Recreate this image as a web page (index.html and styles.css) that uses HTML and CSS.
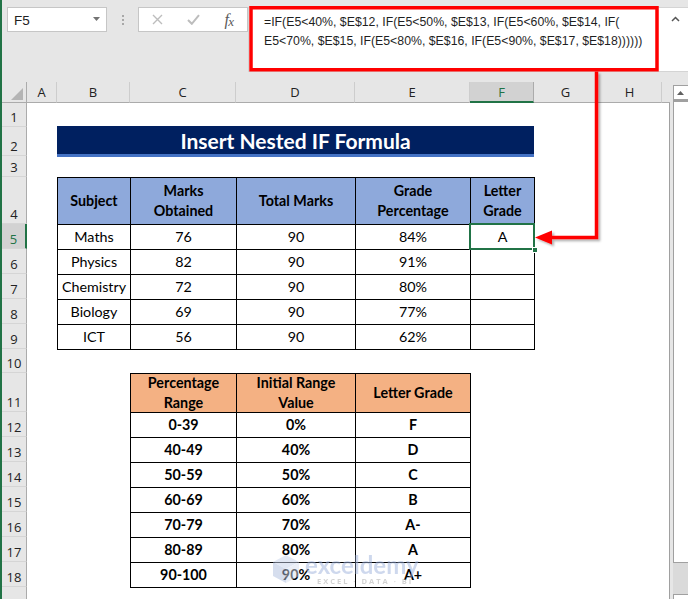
FILE: index.html
```html
<!DOCTYPE html>
<html>
<head>
<meta charset="utf-8">
<link rel="stylesheet" href="styles.css">
</head>
<body>
<div class="app">
  <div class="edge"></div>
  <div class="main">
    <div class="fbar">
      <div class="namebox"><span>F5</span>
        <svg class="caret" width="7" height="4" viewBox="0 0 7 4"><polygon points="0,0 7,0 3.5,4" fill="#737373"/></svg>
      </div>
      <div class="dots"><i></i><i></i><i></i></div>
      <div class="fbtns">
        <div class="slot"><svg width="11" height="11" viewBox="0 0 11 11"><path d="M1 1 L10 10 M10 1 L1 10" stroke="#bdbdbd" stroke-width="1.4" fill="none"/></svg></div>
        <div class="slot"><svg width="13" height="11" viewBox="0 0 13 11"><path d="M1 6 L4.8 9.8 L12 1.2" stroke="#bdbdbd" stroke-width="2" fill="none"/></svg></div>
        <div class="slot"><span class="fx">f<span class="fxx">x</span></span></div>
      </div>
      <div class="finput">
        <div class="ftext">
          <div>=IF(E5&lt;40%, $E$12, IF(E5&lt;50%, $E$13, IF(E5&lt;60%, $E$14, IF(</div>
          <div>E5&lt;70%, $E$15, IF(E5&lt;80%, $E$16, IF(E5&lt;90%, $E$17, $E$18))))))</div>
        </div>
        <svg class="chev" width="9" height="6" viewBox="0 0 9 6"><path d="M1 5 L4.5 1.5 L8 5" stroke="#555" stroke-width="1.5" fill="none"/></svg>
      </div>
    </div>
    <div class="sheetwrap">
      <div class="sheet">
        <div class="colheads">
          <div class="ch corner"><div class="tri"></div></div>
          <div class="ch w30">A</div>
          <div class="ch w73">B</div>
          <div class="ch w106">C</div>
          <div class="ch w119">D</div>
          <div class="ch w115">E</div>
          <div class="ch w64 sel">F</div>
          <div class="ch w64">G</div>
          <div class="ch w64">H</div>
          <div class="ch rest"></div>
        </div>
        <div class="body">
          <div class="rowheads">
            <div class="rh h24">1</div>
            <div class="rh h29">2</div>
            <div class="rh h21">3</div>
            <div class="rh h47">4</div>
            <div class="rh h25 sel">5</div>
            <div class="rh h25">6</div>
            <div class="rh h25">7</div>
            <div class="rh h25">8</div>
            <div class="rh h25">9</div>
            <div class="rh h24">10</div>
            <div class="rh h39">11</div>
            <div class="rh h25">12</div>
            <div class="rh h25">13</div>
            <div class="rh h25">14</div>
            <div class="rh h25">15</div>
            <div class="rh h25">16</div>
            <div class="rh h25">17</div>
            <div class="rh h25">18</div>
            <div class="rh h25"></div>
          </div>
          <div class="cells">
            <div class="sp s23"></div>
            <div class="title">Insert Nested IF Formula</div>
            <div class="sp s20"></div>
            <div class="tbl t1">
              <div class="c h">Subject</div>
              <div class="c h">Marks<br>Obtained</div>
              <div class="c h">Total Marks</div>
              <div class="c h">Grade<br>Percentage</div>
              <div class="c h">Letter<br>Grade</div>

              <div class="c">Maths</div><div class="c">76</div><div class="c">90</div><div class="c">84%</div><div class="c active">A<span class="sel-box"></span><span class="handle"></span></div>
              <div class="c">Physics</div><div class="c">82</div><div class="c">90</div><div class="c">91%</div><div class="c"></div>
              <div class="c">Chemistry</div><div class="c">72</div><div class="c">90</div><div class="c">80%</div><div class="c"></div>
              <div class="c">Biology</div><div class="c">69</div><div class="c">90</div><div class="c">77%</div><div class="c"></div>
              <div class="c">ICT</div><div class="c">56</div><div class="c">90</div><div class="c">62%</div><div class="c"></div>
            </div>
            <div class="sp s23"></div>
            <div class="tbl t2">
              <div class="c h">Percentage<br>Range</div>
              <div class="c h">Initial Range<br>Value</div>
              <div class="c h">Letter Grade</div>

              <div class="c">0-39</div><div class="c">0%</div><div class="c">F</div>
              <div class="c">40-49</div><div class="c">40%</div><div class="c">D</div>
              <div class="c">50-59</div><div class="c">50%</div><div class="c">C</div>
              <div class="c">60-69</div><div class="c">60%</div><div class="c">B</div>
              <div class="c">70-79</div><div class="c">70%</div><div class="c">A-</div>
              <div class="c">80-89</div><div class="c">80%</div><div class="c">A</div>
              <div class="c">90-100</div><div class="c">90%</div><div class="c">A+</div>
            </div>
          </div>
        </div>
      </div>
      <div class="vscroll">
        <div class="sb-up"><svg width="7" height="4" viewBox="0 0 7 4"><polygon points="0,4 7,4 3.5,0" fill="#606060"/></svg></div>
        <div class="sb-thumb"></div>
        <div class="sb-track"></div>
        <div class="sb-down"></div>
      </div>
    </div>
  </div>

  <svg class="annot" width="688" height="599" viewBox="0 0 688 599">
    <defs>
      <filter id="sh" x="-10%" y="-10%" width="130%" height="130%">
        <feDropShadow dx="2" dy="2" stdDeviation="1" flood-color="#000" flood-opacity="0.3"/>
      </filter>
    </defs>
    <rect x="251" y="7.75" width="406" height="62" fill="none" stroke="#ff0000" stroke-width="3.5"/>
    <g filter="url(#sh)">
      <path d="M596.5 71.5 L596.5 237.5 L549 237.5" fill="none" stroke="#ff0000" stroke-width="3.5"/>
      <polygon points="535,237.5 552,230.5 552,244.5" fill="#ff0000"/>
    </g>
  </svg>

  <div class="wm">
    <svg class="cube" width="28" height="30" viewBox="0 0 28 30">
      <polygon points="14,1 27,8 14,15 1,8" fill="#c6d2ea"/>
      <polygon points="1,8 14,15 14,29 1,22" fill="#aebedf"/>
      <polygon points="27,8 14,15 14,29 27,22" fill="#d9e1f1"/>
    </svg>
    <div class="wm-t">
      <div class="wm-name">exceldemy</div>
      <div class="wm-sub">EXCEL · DATA · BI</div>
    </div>
  </div>
</div>
</body>
</html>
```

FILE: styles.css
```css
* { box-sizing: border-box; }
body { margin: 0; background: #e6e6e6; }

.app {
  position: relative;
  width: 688px;
  height: 599px;
  overflow: hidden;
  display: flex;
  background: #e6e6e6;
}
.edge { width: 2px; flex: none; background: #217346; }
.main { width: 686px; flex: none; display: flex; flex-direction: column; }

/* formula bar */
.fbar { height: 82px; flex: none; display: flex; align-items: flex-start; padding-top: 7px; }
.namebox {
  margin-left: 5px;
  width: 100px;
  height: 25px;
  background: #fff;
  border: 1px solid #c6c6c6;
  display: flex;
  align-items: center;
  justify-content: space-between;
  padding: 1px 6px 0 6px;
  font: 13.5px "Liberation Sans", Arial, sans-serif;
  color: #222;
}
.caret { margin-top: -3px; }
.dots { width: 31px; height: 25px; display: flex; flex-direction: column; align-items: center; justify-content: center; gap: 2px; }
.dots i { display: block; width: 2px; height: 2px; background: #a8a8a8; }
.fbtns {
  width: 110px;
  height: 25px;
  background: #fff;
  border: 1px solid #c6c6c6;
  display: flex;
  align-items: center;
}
.slot { width: 36px; display: flex; justify-content: center; align-items: center; }
.fx { font: italic 16px "Liberation Serif", "Times New Roman", serif; color: #5a5a5a; letter-spacing: -0.5px; }
.fxx { font-size: 13px; position: relative; top: 1px; }

.finput {
  flex: 1;
  height: 65px;
  background: #fff;
  border: 1px solid #d4d4d4;
  border-right: none;
  padding: 5px 0 0 15px;
  display: flex;
  align-items: flex-start;
}
.ftext {
  flex: 1;
  font: 12.3px/19px "Liberation Sans", Arial, sans-serif;
  color: #1f1f1f;
  white-space: nowrap;
}
.chev { margin: 3px 8px 0 0; }

/* sheet */
.sheetwrap { flex: 1; display: flex; min-height: 0; }
.sheet { width: 668px; flex: none; display: flex; flex-direction: column; }
.colheads { height: 21px; flex: none; display: flex; }
.ch {
  height: 21px;
  flex: none;
  border-right: 1px solid #cdcdcd;
  border-bottom: 1px solid #ababab;
  display: flex;
  align-items: center;
  justify-content: center;
  font: 13px "Open Sans", sans-serif;
  color: #222;
}
.corner { width: 25px; border-right-color: #ababab; align-items: flex-end; justify-content: flex-end; padding: 0 3px 2px 0; }
.tri { width: 12px; height: 12px; background: #b4b4b4; clip-path: polygon(100% 0, 100% 100%, 0 100%); }
.w30 { width: 30px; }
.w73 { width: 73px; }
.w106 { width: 106px; }
.w119 { width: 119px; }
.w115 { width: 115px; }
.w64 { width: 64px; }
.ch.sel { background: #d2d2d2; color: #217346; border-bottom: 2px solid #217346; border-right-color: #ababab; }
.ch.rest { flex: 1; border-right: none; }

.body { flex: 1; display: flex; border-right: 1px solid #a0a0a0; min-height: 0; }
.rowheads { width: 25px; flex: none; display: flex; flex-direction: column; }
.rh {
  flex: none;
  border-right: 1px solid #ababab;
  border-bottom: 1px solid #d5d5d5;
  display: flex;
  align-items: flex-end;
  justify-content: center;
  font: 13px/16px "Open Sans", sans-serif;
  color: #222;
  padding-bottom: 1px;
}
.rh.sel { background: #d2d2d2; color: #217346; border-right: 2px solid #217346; }
.h21 { height: 21px; }
.h24 { height: 24px; }
.h25 { height: 25px; }
.h29 { height: 29px; }
.h39 { height: 39px; }
.h47 { height: 47px; }

.cells { flex: 1; background: #fff; display: flex; flex-direction: column; align-items: flex-start; }
.sp { flex: none; }
.s20 { height: 20px; }
.s23 { height: 23px; }

.title {
  margin-left: 30px;
  width: 477px;
  height: 31px;
  flex: none;
  background: #002060;
  border-bottom: 3px solid #4472c4;
  color: #fff;
  text-align: center;
  font: bold 21px/24px Lato, "Liberation Sans", sans-serif;
  padding-top: 3px;
}

.tbl { display: grid; gap: 1px; padding: 1px; background: #000; flex: none; }
.t1 {
  margin-left: 30px;
  grid-template-columns: 72px 105px 118px 114px 63px;
  grid-template-rows: 46px repeat(5, 24px);
}
.t2 {
  margin-left: 103px;
  grid-template-columns: 105px 118px 114px;
  grid-template-rows: 38px repeat(7, 24px);
}
.c {
  background: #fff;
  display: flex;
  align-items: center;
  justify-content: center;
  text-align: center;
  font: 14.3px/20px Lato, "Liberation Sans", sans-serif;
  color: #000;
}
.c.h { font-weight: bold; }
.t1 .c.h { background: #8ea9db; }
.t2 .c.h { background: #f4b183; }
.t2 .c { font-weight: bold; }

.active { position: relative; }
.sel-box { position: absolute; top: -2px; left: -2px; right: -1px; bottom: -1px; border: 2px solid #217346; }
.handle { position: absolute; right: -4px; bottom: -4px; width: 6px; height: 6px; background: #217346; border: 1px solid #fff; }

/* scrollbar */
.vscroll { width: 18px; flex: none; padding: 3px 0 0 3px; display: flex; flex-direction: column; overflow: hidden; }
.sb-up { width: 16px; height: 15px; flex: none; border: 1px solid #a0a0a0; background: #fff; display: flex; align-items: center; justify-content: center; padding-right: 1px; }
.sb-thumb { width: 16px; height: 463px; flex: none; border: 1px solid #a0a0a0; border-top-width: 2px; background: #fff; }
.sb-track { width: 16px; height: 31px; flex: none; background: #dadada; }
.sb-down { width: 16px; height: 20px; flex: none; border: 1px solid #a0a0a0; background: #fff; }

/* overlays */
.annot { position: absolute; left: 0; top: 0; pointer-events: none; }
.wm { position: absolute; left: 272px; top: 553px; display: flex; align-items: flex-start; gap: 5px; opacity: 0.5; pointer-events: none; }
.cube { margin-top: 1px; }
.wm-t { display: flex; flex-direction: column; }
.wm-name { font: bold 24px/23px Lato, "Liberation Sans", sans-serif; color: #9fb3dd; }
.wm-sub { font: bold 7.5px/10px "Open Sans", sans-serif; color: #a8a8a8; letter-spacing: 2px; margin-left: 12px; }
```
